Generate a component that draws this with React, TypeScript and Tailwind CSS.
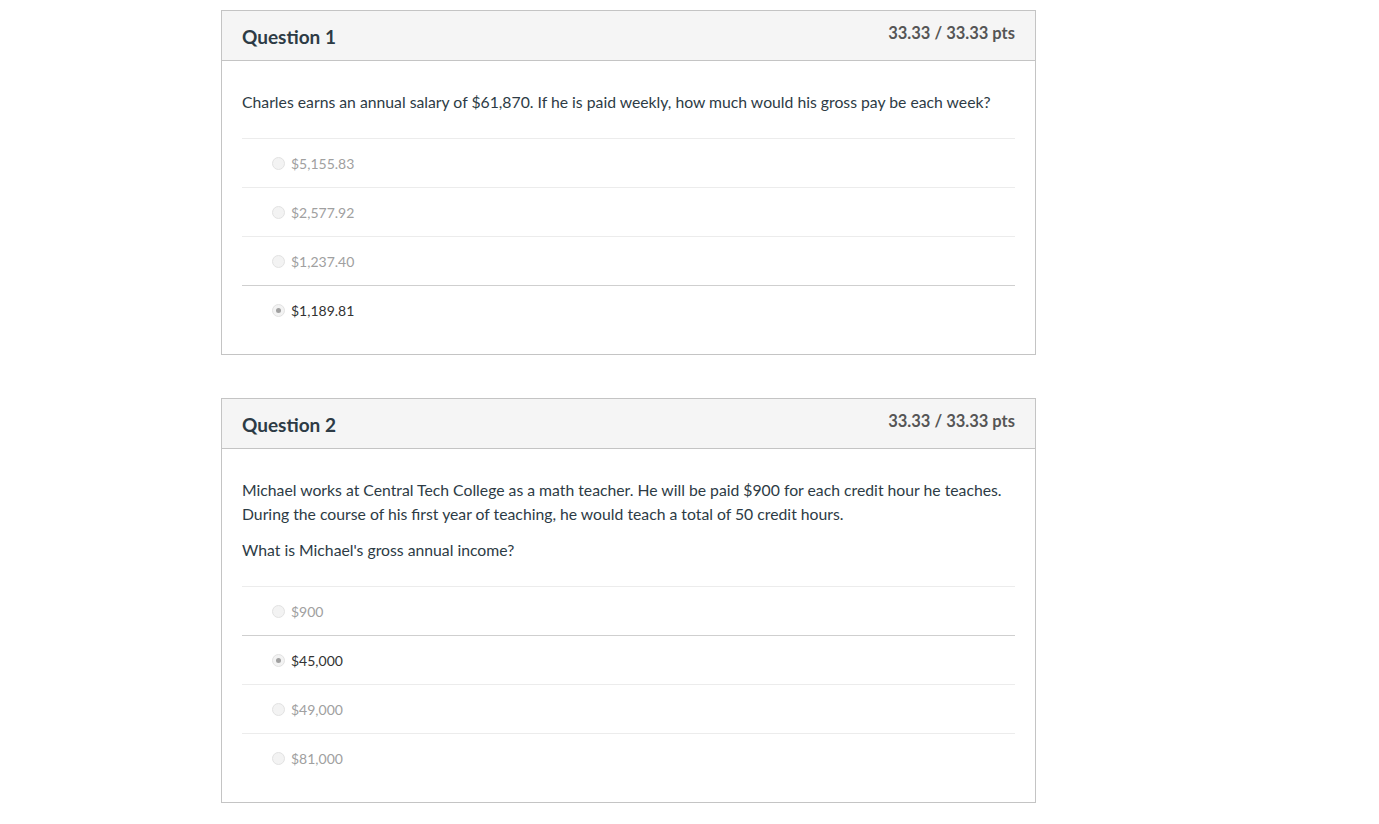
import React from "react"

type Answer = { text: string; selected?: boolean }

type Q = {
  title: string
  pts: string
  paragraphs: string[]
  answers: Answer[]
}

const questions: Q[] = [
  {
    title: "Question 1",
    pts: "33.33 / 33.33 pts",
    paragraphs: [
      "Charles earns an annual salary of $61,870. If he is paid weekly, how much would his gross pay be each week?",
    ],
    answers: [
      { text: "$5,155.83" },
      { text: "$2,577.92" },
      { text: "$1,237.40" },
      { text: "$1,189.81", selected: true },
    ],
  },
  {
    title: "Question 2",
    pts: "33.33 / 33.33 pts",
    paragraphs: [
      "Michael works at Central Tech College as a math teacher. He will be paid $900 for each credit hour he teaches. During the course of his first year of teaching, he would teach a total of 50 credit hours.",
      "What is Michael's gross annual income?",
    ],
    answers: [
      { text: "$900" },
      { text: "$45,000", selected: true },
      { text: "$49,000" },
      { text: "$81,000" },
    ],
  },
]

function Radio({ on }: { on?: boolean }) {
  return (
    <span className="flex h-[13px] w-[13px] items-center justify-center rounded-full border border-[#e2e2e2] bg-[#f3f3f3]">
      {on && <span className="h-[5px] w-[5px] rounded-full bg-[#a0a0a0]" />}
    </span>
  )
}

function QuestionCard({ q }: { q: Q }) {
  return (
    <div className="w-[815px] border border-[#c4c4c4] bg-white">
      <div className="flex h-[50px] items-start justify-between border-b border-[#c4c4c4] bg-[#f5f5f5] px-5">
        <h2 className="mt-[12px] text-[19px] font-bold text-[#2d3b45]">{q.title}</h2>
        <div className="mt-[10px] text-[16.5px] font-bold text-[#555]">{q.pts}</div>
      </div>
      <div className="px-5 pt-[29px] pb-5">
        {q.paragraphs.map((p, i) => (
          <p key={i} className={"text-[15.75px] leading-6 text-[#2d3b45] " + (i > 0 ? "mt-3" : "")}>
            {p}
          </p>
        ))}
        <div className="mt-6">
          {q.answers.map((a, i) => (
            <div
              key={i}
              className={
                "flex h-[49px] items-center gap-[6px] border-t pl-[30px] " +
                (a.selected ? "border-[#cfcfcf]" : "border-[#ececec]")
              }
            >
              <Radio on={a.selected} />
              <span className={"text-[14px] " + (a.selected ? "text-[#333]" : "text-[#a0a0a0]")}>
                {a.text}
              </span>
            </div>
          ))}
        </div>
      </div>
    </div>
  )
}

export default function App() {
  return (
    <div
      className="min-h-screen bg-white pt-[10px] pl-[221px]"
      style={{ fontFamily: "Lato, 'Open Sans', sans-serif" }}
    >
      <div className="flex flex-col gap-[43px]">
        {questions.map((q) => (
          <QuestionCard key={q.title} q={q} />
        ))}
      </div>
    </div>
  )
}
